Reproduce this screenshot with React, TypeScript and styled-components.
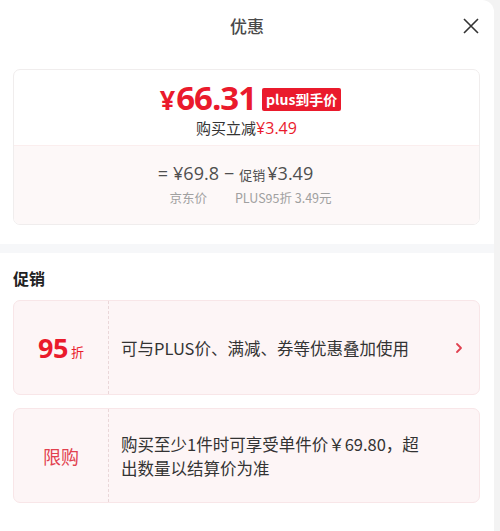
import React from "react";
import styled, { createGlobalStyle } from "styled-components";

const GlobalStyle = createGlobalStyle`
  html, body {
    margin: 0;
    padding: 0;
    background: #f3f3f3;
  }
  body {
    font-family: "Noto Sans CJK SC", "Noto Sans", sans-serif;
    color: #333;
  }
`;

const RED = "#ea1a2c";
const NUM_FONT = `"Open Sans", "Noto Sans CJK SC", sans-serif`;

const Panel = styled.div`
  width: 494px;
  height: 531px;
  background: #fff;
  border-top-right-radius: 12px;
  overflow: hidden;
  display: flex;
  flex-direction: column;
`;

const Header = styled.div`
  position: relative;
  height: 52px;
  display: flex;
  align-items: center;
  justify-content: center;
`;

const Title = styled.div`
  font-size: 17px;
  font-weight: 500;
  color: #4a4a4a;
  margin-top: -2px;
`;

const CloseBtn = styled.button`
  position: absolute;
  right: 14px;
  top: 17px;
  width: 18px;
  height: 18px;
  padding: 0;
  border: none;
  background: none;
  display: flex;
  align-items: center;
  justify-content: center;
`;

const PriceCard = styled.div`
  margin: 17px 14px 0 13px;
  border: 1px solid #f0eded;
  border-radius: 7px;
  overflow: hidden;
  height: 154px;
  display: flex;
  flex-direction: column;
`;

const PriceTop = styled.div`
  height: 75px;
  display: flex;
  flex-direction: column;
  align-items: center;
  border-bottom: 1px solid #fbeeee;
`;

const PriceRow = styled.div`
  display: flex;
  align-items: center;
  gap: 6px;
  margin-top: 12px;
  height: 34px;
  padding-left: 8px;
`;

const BigPrice = styled.div`
  font-family: ${NUM_FONT};
  font-size: 33px;
  font-weight: 700;
  color: ${RED};
  letter-spacing: -1px;
  line-height: 34px;
  small {
    font-size: 27px;
    margin-right: 2px;
  }
`;

const Badge = styled.span`
  background: ${RED};
  color: #fff;
  font-size: 14px;
  font-weight: 700;
  line-height: 23px;
  height: 23px;
  padding: 0 4px;
  border-radius: 2px;
  margin-top: 1px;
`;

const Saving = styled.div`
  font-size: 15px;
  line-height: 20px;
  color: #333;
  margin-top: 2px;
  b {
    font-family: ${NUM_FONT};
    font-size: 16px;
    font-weight: 500;
    color: ${RED};
  }
`;

const PriceBottom = styled.div`
  flex: 1;
  background: #fdf8f8;
  display: flex;
  flex-direction: column;
  align-items: center;
  padding-top: 15px;
`;

const Formula = styled.div`
  display: flex;
  align-items: baseline;
  gap: 5px;
  font-family: ${NUM_FONT};
  font-size: 18px;
  color: #4f4f4f;
  line-height: 24px;
  padding-right: 22px;
`;

const FormulaLabel = styled.span`
  font-family: "Noto Sans CJK SC", sans-serif;
  font-size: 13px;
  margin-right: -3px;
`;

const Captions = styled.div`
  display: flex;
  gap: 28px;
  font-size: 12.5px;
  color: #a0a0a0;
  line-height: 20px;
  margin-top: 1px;
  padding-left: 8px;
`;

const Band = styled.div`
  height: 9px;
  background: #f6f7f9;
  margin-top: 19px;
`;

const SectionTitle = styled.div`
  font-size: 16px;
  font-weight: 700;
  color: #222;
  padding: 14px 13px 0;
  line-height: 22px;
`;

const Promo = styled.div<{ $top: number }>`
  margin: ${(p) => p.$top}px 14px 0 13px;
  height: 95px;
  background: #fdf5f6;
  border: 1px solid #f8e6e8;
  border-radius: 7px;
  box-sizing: border-box;
  display: flex;
  align-items: stretch;
`;

const PromoTag = styled.div<{ $soft?: boolean }>`
  width: 94px;
  flex-shrink: 0;
  border-right: 1px dashed #ead7d9;
  display: flex;
  align-items: center;
  justify-content: center;
  color: ${(p) => (p.$soft ? "#e2414f" : RED)};
  font-size: 18px;
`;

const Discount = styled.span`
  font-family: ${NUM_FONT};
  font-size: 27px;
  font-weight: 700;
  letter-spacing: -0.5px;
`;

const DiscountUnit = styled.span`
  font-size: 13px;
  margin-left: 3px;
  margin-top: 8px;
`;

const PromoText = styled.div<{ $pr: number }>`
  flex: 1;
  display: flex;
  align-items: center;
  padding: 0 ${(p) => p.$pr}px 0 12px;
  font-size: 16.5px;
  line-height: 24px;
  color: #333;
`;

const Chevron = styled.div`
  display: flex;
  align-items: center;
  padding-right: 16px;
`;

export default function App() {
  return (
    <>
      <GlobalStyle />
      <Panel>
        <Header>
          <Title>优惠</Title>
          <CloseBtn aria-label="关闭">
            <svg width="16" height="16" viewBox="0 0 16 16">
              <path d="M1 1 L15 15 M15 1 L1 15" stroke="#333" strokeWidth="1.6" fill="none" />
            </svg>
          </CloseBtn>
        </Header>

        <PriceCard>
          <PriceTop>
            <PriceRow>
              <BigPrice>
                <small>¥</small>66.31
              </BigPrice>
              <Badge>plus到手价</Badge>
            </PriceRow>
            <Saving>
              购买立减<b>¥3.49</b>
            </Saving>
          </PriceTop>
          <PriceBottom>
            <Formula>
              <span>=</span>
              <span>¥69.8</span>
              <span>−</span>
              <FormulaLabel>促销</FormulaLabel>
              <span>¥3.49</span>
            </Formula>
            <Captions>
              <span>京东价</span>
              <span>PLUS95折 3.49元</span>
            </Captions>
          </PriceBottom>
        </PriceCard>

        <Band />

        <SectionTitle>促销</SectionTitle>

        <Promo $top={11}>
          <PromoTag>
            <Discount>95</Discount>
            <DiscountUnit>折</DiscountUnit>
          </PromoTag>
          <PromoText $pr={8}>可与PLUS价、满减、券等优惠叠加使用</PromoText>
          <Chevron>
            <svg width="8" height="12" viewBox="0 0 8 12">
              <path d="M2 2 L6 6 L2 10" stroke="#e0404f" strokeWidth="1.8" fill="none" strokeLinecap="round" strokeLinejoin="round" />
            </svg>
          </Chevron>
        </Promo>

        <Promo $top={13}>
          <PromoTag $soft>限购</PromoTag>
          <PromoText $pr={50}>购买至少1件时可享受单件价￥69.80，超出数量以结算价为准</PromoText>
        </Promo>
      </Panel>
    </>
  );
}
